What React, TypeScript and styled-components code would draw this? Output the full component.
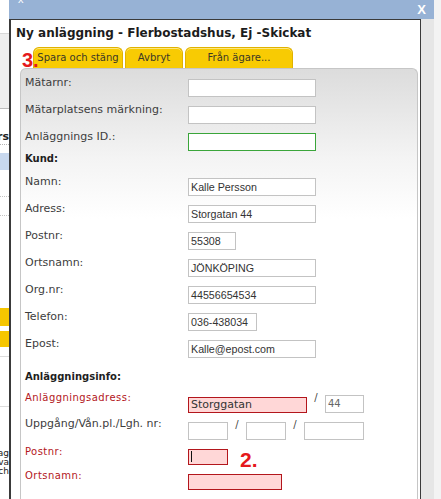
import React from 'react';
import styled, { createGlobalStyle } from 'styled-components';

const GlobalStyle = createGlobalStyle`
  html, body {
    margin: 0;
    padding: 0;
    background: #ffffff;
  }
  * {
    box-sizing: border-box;
  }
`;

const verdana = `"DejaVu Sans", Verdana, sans-serif`;
const arial = `"Liberation Sans", Arial, sans-serif`;

const Page = styled.div`
  width: 441px;
  height: 499px;
  overflow: hidden;
  display: flex;
  font-family: ${verdana};
`;

/* the page behind the dialog, only a thin strip is visible */
const BackStrip = styled.div`
  width: 9px;
  flex: none;
  display: flex;
  flex-direction: column;
  overflow: hidden;
  background: #fff;
`;

const BackBlock = styled.div<{ $h: number; $bg?: string; $top?: string; $bottom?: string }>`
  height: ${({ $h }) => $h}px;
  flex: none;
  background: ${({ $bg }) => $bg || '#fff'};
  border-top: ${({ $top }) => $top || 'none'};
  border-bottom: ${({ $bottom }) => $bottom || 'none'};
`;

const BackText = styled.div<{ $bold?: boolean; $lh: number }>`
  display: flex;
  flex-direction: column;
  align-items: flex-end;
  white-space: nowrap;
  font-family: ${verdana};
  font-size: ${({ $bold }) => ($bold ? 11 : 9)}px;
  font-weight: ${({ $bold }) => ($bold ? 700 : 400)};
  line-height: ${({ $lh }) => $lh}px;
  color: #222;
`;

const Window = styled.div`
  width: 425px;
  flex: none;
  display: flex;
  flex-direction: column;
`;

const TitleBar = styled.div`
  height: 19px;
  flex: none;
  background: #97b2d5;
  display: flex;
  justify-content: space-between;
  align-items: flex-start;
  padding: 0 8px 0 9px;
  color: #fff;
  font-family: ${arial};
  overflow: hidden;
`;

const MinMark = styled.span`
  font-size: 11px;
  line-height: 11px;
  margin-top: -6px;
`;

const CloseMark = styled.span`
  font-size: 13px;
  font-weight: 700;
  line-height: 13px;
  margin-top: 3px;
`;

const Body = styled.div`
  flex: 1;
  display: flex;
`;

const Frame = styled.div`
  flex: 1;
  background: #fff;
  border-left: 2px solid #3a3a3a;
  border-top: 1px solid #3a3a3a;
  border-right: 1px solid #3a3a3a;
  display: flex;
  flex-direction: column;
`;

const Shade = styled.div`
  width: 13px;
  flex: none;
  background: #e6e6e6;
`;

const RightStrip = styled.div`
  flex: 1;
  background: #f3f3f3;
`;

const Heading = styled.h1`
  margin: 0;
  padding: 6px 0 0 5px;
  font-family: ${verdana};
  font-size: 12px;
  line-height: 15px;
  font-weight: 700;
  color: #1c1c1c;
`;

const TabBar = styled.div`
  position: relative;
  display: flex;
  gap: 2px;
  margin-top: 6px;
  padding-left: 22px;
`;

const Tab = styled.button<{ $w: number }>`
  width: ${({ $w }) => $w}px;
  height: 21px;
  padding: 0;
  border: 1px solid #e0b200;
  border-bottom: none;
  border-radius: 6px 6px 0 0;
  background: #f8cb03;
  box-shadow: inset 0 1px 0 #fde67f;
  font-family: ${verdana};
  font-size: 10px;
  line-height: 20px;
  color: #3b3826;
  text-align: center;
`;

const Marker = styled.span<{ $size: number }>`
  font-family: ${arial};
  font-weight: 700;
  font-size: ${({ $size }) => $size}px;
  line-height: ${({ $size }) => $size}px;
  color: #e5191c;
`;

const StepThree = styled(Marker)`
  position: absolute;
  left: 11px;
  top: 3px;
`;

const Panel = styled.div`
  flex: 1;
  margin: 0 2px 0 9px;
  padding: 7px 4px 0;
  border: 1px solid #c6c6c6;
  border-bottom: none;
  border-radius: 6px 6px 0 0;
  background: linear-gradient(#dcdcdc 0, #f4f4f4 90px, #ffffff 150px);
`;

const Row = styled.div<{ $h: number }>`
  display: grid;
  grid-template-columns: 163px auto;
  align-items: start;
  height: ${({ $h }) => $h}px;
`;

type Tone = 'plain' | 'head' | 'error';

const Label = styled.div<{ $tone?: Tone }>`
  font-family: ${verdana};
  line-height: 14px;
  white-space: nowrap;
  font-size: ${({ $tone }) => ($tone === 'plain' || !$tone ? 11 : 10)}px;
  font-weight: ${({ $tone }) => ($tone === 'head' ? 700 : 400)};
  letter-spacing: ${({ $tone }) => ($tone === 'error' ? '0.45px' : 'normal')};
  color: ${({ $tone }) => ($tone === 'error' ? '#b3161c' : $tone === 'head' ? '#1e1e1e' : '#3d3d3d')};
`;

const Value = styled.div<{ $top?: number }>`
  display: flex;
  align-items: flex-start;
  padding-top: ${({ $top }) => $top ?? 3}px;
`;

const Field = styled.div<{ $w: number; $h?: number; $state?: 'ok' | 'error'; $small?: boolean; $mt?: number }>`
  position: relative;
  width: ${({ $w }) => $w}px;
  height: ${({ $h }) => $h ?? 18}px;
  margin-top: ${({ $mt }) => $mt ?? 0}px;
  padding-left: 2px;
  border: 1px solid
    ${({ $state }) => ($state === 'ok' ? '#3aa53a' : $state === 'error' ? '#b3161c' : '#c3c3c3')};
  background: ${({ $state }) => ($state === 'error' ? '#ffd7d7' : '#fff')};
  font-family: ${({ $small, $state }) => ($small || $state === 'error' ? verdana : arial)};
  font-size: ${({ $small, $state }) => ($small ? 10 : $state === 'error' ? 11 : 10.7)}px;
  line-height: ${({ $h }) => ($h ?? 18) - 2}px;
  color: ${({ $small }) => ($small ? '#666' : '#333')};
  white-space: nowrap;
  overflow: hidden;
`;

const Caret = styled.span`
  position: absolute;
  left: 2px;
  top: 1px;
  width: 1px;
  height: 11px;
  background: #111;
`;

const Slash = styled.span<{ $mt?: number }>`
  width: 18px;
  text-align: center;
  font-family: ${verdana};
  font-size: 10px;
  line-height: 10px;
  color: #444;
  margin-top: ${({ $mt }) => $mt ?? -2}px;
`;

const StepTwo = styled(Marker)`
  margin: 4px 0 0 12px;
`;

const App = () => {
  return (
    <>
      <GlobalStyle />
      <Page>
        <BackStrip>
          <BackBlock $h={33} />
          <BackBlock $h={75} $bg="#eeeeee" $top="1px solid #d8d8d8" />
          <BackBlock $h={37} $top="1px solid #bcbcbc" $bottom="1px dotted #b5b5b5">
            <BackText $bold $lh={14} style={{ paddingTop: 21 }}>
              Användars
            </BackText>
          </BackBlock>
          <BackBlock $h={8} />
          <BackBlock $h={17} $bg="#c8d8ee" />
          <BackBlock $h={27} $bottom="1px dotted #c4c4c4" />
          <BackBlock $h={19} $bottom="1px dotted #c4c4c4" />
          <BackBlock $h={92} />
          <BackBlock $h={18} $bg="#f6c600" />
          <BackBlock $h={5} />
          <BackBlock $h={16} $bg="#f6c600" />
          <BackBlock $h={10} $bottom="1px solid #dcdcdc" />
          <BackBlock $h={50} $bottom="1px solid #dcdcdc" />
          <BackBlock $h={42} />
          <BackText $lh={9}>
            <span>Meddelag</span>
            <span>Ansvarva</span>
            <span>Sökmatch</span>
          </BackText>
        </BackStrip>

        <Window>
          <TitleBar>
            <MinMark>x</MinMark>
            <CloseMark>X</CloseMark>
          </TitleBar>
          <Body>
            <Frame>
              <Heading>Ny anläggning - Flerbostadshus, Ej -Skickat</Heading>
              <TabBar>
                <StepThree $size={20}>3.</StepThree>
                <Tab $w={90}>Spara och stäng</Tab>
                <Tab $w={58}>Avbryt</Tab>
                <Tab $w={108}>Från ägare...</Tab>
              </TabBar>
              <Panel>
                <Row $h={27}>
                  <Label>Mätarnr:</Label>
                  <Value>
                    <Field $w={128} />
                  </Value>
                </Row>
                <Row $h={27}>
                  <Label>Mätarplatsens märkning:</Label>
                  <Value>
                    <Field $w={128} />
                  </Value>
                </Row>
                <Row $h={22}>
                  <Label>Anläggnings ID.:</Label>
                  <Value>
                    <Field $w={128} $state="ok" />
                  </Value>
                </Row>
                <Row $h={23}>
                  <Label $tone="head">Kund:</Label>
                </Row>
                <Row $h={27}>
                  <Label>Namn:</Label>
                  <Value>
                    <Field $w={128}>Kalle Persson</Field>
                  </Value>
                </Row>
                <Row $h={27}>
                  <Label>Adress:</Label>
                  <Value>
                    <Field $w={128}>Storgatan 44</Field>
                  </Value>
                </Row>
                <Row $h={27}>
                  <Label>Postnr:</Label>
                  <Value>
                    <Field $w={48}>55308</Field>
                  </Value>
                </Row>
                <Row $h={27}>
                  <Label>Ortsnamn:</Label>
                  <Value>
                    <Field $w={128}>JÖNKÖPING</Field>
                  </Value>
                </Row>
                <Row $h={27}>
                  <Label>Org.nr:</Label>
                  <Value>
                    <Field $w={128}>44556654534</Field>
                  </Value>
                </Row>
                <Row $h={27}>
                  <Label>Telefon:</Label>
                  <Value>
                    <Field $w={69}>036-438034</Field>
                  </Value>
                </Row>
                <Row $h={33}>
                  <Label>Epost:</Label>
                  <Value>
                    <Field $w={128}>Kalle@epost.com</Field>
                  </Value>
                </Row>
                <Row $h={21}>
                  <Label $tone="head">Anläggningsinfo:</Label>
                </Row>
                <Row $h={26}>
                  <Label $tone="error">Anläggningsadress:</Label>
                  <Value $top={4}>
                    <Field $w={119} $h={16} $mt={2} $state="error">
                      Storggatan
                    </Field>
                    <Slash>/</Slash>
                    <Field $w={39} $small>
                      44
                    </Field>
                  </Value>
                </Row>
                <Row $h={28}>
                  <Label>Uppgång/Vån.pl./Lgh. nr:</Label>
                  <Value $top={5}>
                    <Field $w={40} />
                    <Slash>/</Slash>
                    <Field $w={40} />
                    <Slash>/</Slash>
                    <Field $w={60} />
                  </Value>
                </Row>
                <Row $h={24}>
                  <Label $tone="error">Postnr:</Label>
                  <Value $top={0}>
                    <Field $w={40} $h={16} $mt={4} $state="error">
                      <Caret />
                    </Field>
                    <StepTwo $size={21}>2.</StepTwo>
                  </Value>
                </Row>
                <Row $h={30}>
                  <Label $tone="error">Ortsnamn:</Label>
                  <Value $top={5}>
                    <Field $w={94} $h={16} $state="error" />
                  </Value>
                </Row>
              </Panel>
            </Frame>
            <Shade />
          </Body>
        </Window>
        <RightStrip />
      </Page>
    </>
  );
};

export default App;
